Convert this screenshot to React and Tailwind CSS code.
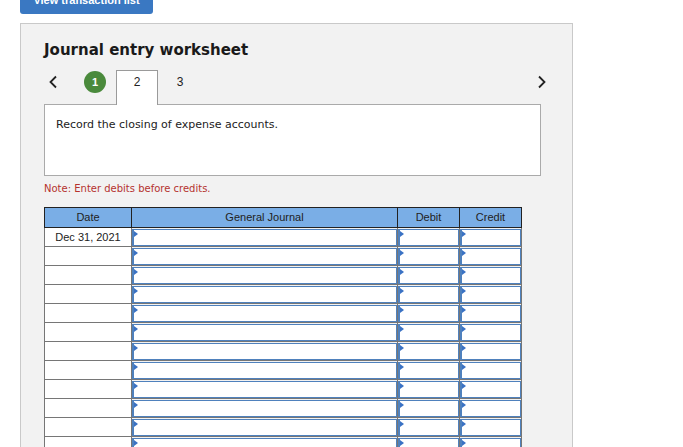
import React from 'react';

const ROWS = 12;

function InputCell() {
  return (
    <td className="border border-[#767676] p-0 h-[19px]">
      <div className="relative h-[17px] bg-white border border-[#4f81bd] border-l-2">
        <span className="absolute left-0 top-[1px] w-0 h-0 border-y-[3px] border-y-transparent border-l-[4px] border-l-[#3a72c4]" />
      </div>
    </td>
  );
}

export default function App() {
  const rows = Array.from({ length: ROWS }, (_, i) => i);
  return (
    <div className="relative w-[683px] h-[447px] overflow-hidden bg-white font-['DejaVu_Sans',Verdana,sans-serif]">
      {/* top button, cut off by the viewport */}
      <div className="absolute left-[20px] top-[-12px] w-[133px] h-[26px] rounded-b-[3px] bg-[#3a78c2] flex items-end justify-center pb-[8px]">
        <span className="text-white text-[11px] font-bold leading-none font-['Liberation_Sans',Arial,sans-serif]">View transaction list</span>
      </div>

      <div className="absolute left-[20px] top-[23px] w-[553px] h-[440px] bg-[#f2f2f2] border border-[#c9c9c9]">
        <div className="pl-[23px] pt-[16px] pr-[31px]">
          <h1 className="text-[15px] font-bold text-[#1a1a1a] leading-[20px]">Journal entry worksheet</h1>

          {/* step tabs */}
          <div className="mt-[10px] flex items-start h-[34px]">
            <div className="w-[40px] pt-[5px] pl-[4px]">
              <svg width="10" height="14" viewBox="0 0 10 14">
                <path d="M8 1.5 L2.5 7 L8 12.5" fill="none" stroke="#222" strokeWidth="1.8" />
              </svg>
            </div>
            <div className="mt-[1px] w-[22px] h-[22px] rounded-full bg-[#4a8a3c] flex items-center justify-center text-white text-[11px] font-bold font-['Liberation_Sans',Arial,sans-serif]">1</div>
            <div className="relative z-10 ml-[10px] w-[42px] h-[35px] bg-white border border-[#9a9a9a] border-b-0 flex justify-center pt-[4px] text-[12px] leading-[14px] text-[#222] font-['Liberation_Sans',Arial,sans-serif]">2</div>
            <div className="w-[44px] flex justify-center pt-[5px] text-[12px] leading-[14px] text-[#222] font-['Liberation_Sans',Arial,sans-serif]">3</div>
            <div className="flex-1" />
            <div className="pt-[5px] -mr-[6px]">
              <svg width="10" height="14" viewBox="0 0 10 14">
                <path d="M2 1.5 L7.5 7 L2 12.5" fill="none" stroke="#222" strokeWidth="1.8" />
              </svg>
            </div>
          </div>

          <div className="w-[497px] h-[72px] bg-white border border-[#aaaaaa] px-[11px] pt-[13px]">
            <p className="text-[11px] text-[#222] leading-[14px]">Record the closing of expense accounts.</p>
          </div>

          <p className="mt-[6px] text-[10px] text-[#b5322f] leading-[13px]">Note: Enter debits before credits.</p>

          <table className="mt-[12px] border-collapse font-['Liberation_Sans',Arial,sans-serif] text-[11px] text-[#222]">
            <thead>
              <tr className="bg-[#7aaee6] h-[20px]">
                <th className="w-[87px] border border-[#222] font-normal p-0">Date</th>
                <th className="w-[266px] border border-[#222] font-normal p-0">General Journal</th>
                <th className="w-[62px] border border-[#222] font-normal p-0">Debit</th>
                <th className="w-[62px] border border-[#222] font-normal p-0">Credit</th>
              </tr>
            </thead>
            <tbody>
              {rows.map((i) => (
                <tr key={i} className="h-[19px]">
                  <td className="border border-[#767676] bg-white text-center p-0 h-[19px] leading-[17px]">
                    {i === 0 ? 'Dec 31, 2021' : ''}
                  </td>
                  <InputCell />
                  <InputCell />
                  <InputCell />
                </tr>
              ))}
            </tbody>
          </table>
        </div>
      </div>
    </div>
  );
}
